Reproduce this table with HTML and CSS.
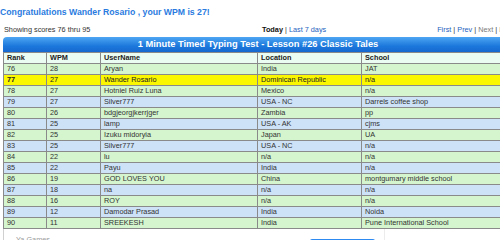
FILE: index.html
```html
<!DOCTYPE html>
<html>
<head>
<meta charset="utf-8">
<link rel="stylesheet" href="styles.css">
</head>
<body>
<h1 class="congrats">Congratulations Wander Rosario , your WPM is 27!</h1>
<div class="wrap">
  <div class="nav">
    <span class="showing">Showing scores 76 thru 95</span>
    <span class="period"><b>Today</b> | <a class="link">Last 7 days</a></span>
    <span class="pager"><a class="link">First</a> | <a class="link">Prev</a> | <span class="off">Next</span> | <span class="off">Last</span></span>
  </div>
  <div class="board-title">1 Minute Timed Typing Test - Lesson #26 Classic Tales</div>
  <table class="scores">
    <colgroup>
      <col class="c-rank"><col class="c-wpm"><col class="c-user"><col class="c-loc"><col class="c-school">
    </colgroup>
    <thead>
      <tr><th>Rank</th><th>WPM</th><th>UserName</th><th>Location</th><th>School</th></tr>
    </thead>
    <tbody>
      <tr class="g"><td>76</td><td>28</td><td>Aryan</td><td>India</td><td>JAT</td></tr>
      <tr class="me"><td><b>77</b></td><td>27</td><td>Wander Rosario</td><td>Dominican Republic</td><td>n/a</td></tr>
      <tr class="g"><td>78</td><td>27</td><td>Hotniel Ruiz Luna</td><td>Mexico</td><td>n/a</td></tr>
      <tr class="b"><td>79</td><td>27</td><td>Silver777</td><td>USA - NC</td><td>Darrels coffee shop</td></tr>
      <tr class="g"><td>80</td><td>26</td><td>bdgjeorgjkerrjger</td><td>Zambia</td><td>pp</td></tr>
      <tr class="b"><td>81</td><td>25</td><td>lamp</td><td>USA - AK</td><td>cjms</td></tr>
      <tr class="g"><td>82</td><td>25</td><td>Izuku midoryia</td><td>Japan</td><td>UA</td></tr>
      <tr class="b"><td>83</td><td>25</td><td>Silver777</td><td>USA - NC</td><td>n/a</td></tr>
      <tr class="g"><td>84</td><td>22</td><td>lu</td><td>n/a</td><td>n/a</td></tr>
      <tr class="b"><td>85</td><td>22</td><td>Payu</td><td>India</td><td>n/a</td></tr>
      <tr class="g"><td>86</td><td>19</td><td>GOD LOVES YOU</td><td>China</td><td>montgumary middle school</td></tr>
      <tr class="b"><td>87</td><td>18</td><td>na</td><td>n/a</td><td>n/a</td></tr>
      <tr class="g"><td>88</td><td>16</td><td>ROY</td><td>n/a</td><td>n/a</td></tr>
      <tr class="b"><td>89</td><td>12</td><td>Damodar Prasad</td><td>India</td><td>Noida</td></tr>
      <tr class="g"><td>90</td><td>11</td><td>SREEKESH</td><td>India</td><td>Pune International School</td></tr>
    </tbody>
  </table>
  <div class="more">
    <div class="games">
      <div class="games-label">Ya Games</div>
      <div class="games-btn"></div>
    </div>
  </div>
</div>
</body>
</html>
```
FILE: styles.css
```css
html, body {
  margin: 0;
  padding: 0;
  overflow: hidden;
  background: #ffffff;
}
body {
  font-family: "Liberation Sans", Arial, sans-serif;
  font-size: 7.3px;
  color: #333333;
}
.congrats {
  margin: 0;
  padding: 7px 0 0 0;
  font-size: 8.7px;
  line-height: 11px;
  font-weight: bold;
  color: #2a7be0;
  white-space: nowrap;
}
.wrap {
  margin-left: 3px;
  width: 510px;
}
.nav {
  display: flex;
  align-items: center;
  height: 10px;
  margin-top: 6px;
  margin-bottom: 3px;
  white-space: nowrap;
}
.showing {
  padding-left: 1px;
  width: 258px;
  color: #333;
}
.period b {
  color: #111;
}
.pager {
  margin-left: auto;
}
.link {
  color: #1f5fc0;
}
.off {
  color: #7a7a7a;
}
.board-title {
  height: 15px;
  line-height: 15px;
  text-align: center;
  color: #ffffff;
  font-weight: bold;
  font-size: 9.3px;
  background: linear-gradient(#4ea6f2, #1c78dc 60%, #1668cf);
  border-radius: 4px 4px 0 0;
  white-space: nowrap;
}
.scores {
  width: 100%;
  border-collapse: collapse;
  table-layout: fixed;
}
.c-rank { width: 43px; }
.c-wpm { width: 54px; }
.c-user { width: 157px; }
.c-loc { width: 104px; }
.c-school { width: auto; }
.scores th, .scores td {
  border: 1px solid #8a8a8a;
  padding: 0 3px;
  height: 10px;
  line-height: 10px;
  text-align: left;
  white-space: nowrap;
  overflow: hidden;
}
.scores th {
  background: #ebfdf3;
  color: #222;
  font-weight: bold;
}
.scores tr.g td { background: #d4f5ce; }
.scores tr.b td { background: #cde2f7; }
.scores tr.me td { background: #fbf700; color: #222; }
.more {
  border-left: 1px solid #d0d0d0;
  height: 20px;
}
.games {
  width: 380px;
  height: 20px;
  border-right: 1px solid #ececec;
  position: relative;
}
.games-label {
  padding: 6px 0 0 12px;
  color: #9a9a9a;
  font-size: 7.3px;
}
.games-btn {
  position: absolute;
  left: 306px;
  top: 10px;
  width: 65px;
  height: 10px;
  background: #2d8af0;
  border-radius: 2px;
}
```
